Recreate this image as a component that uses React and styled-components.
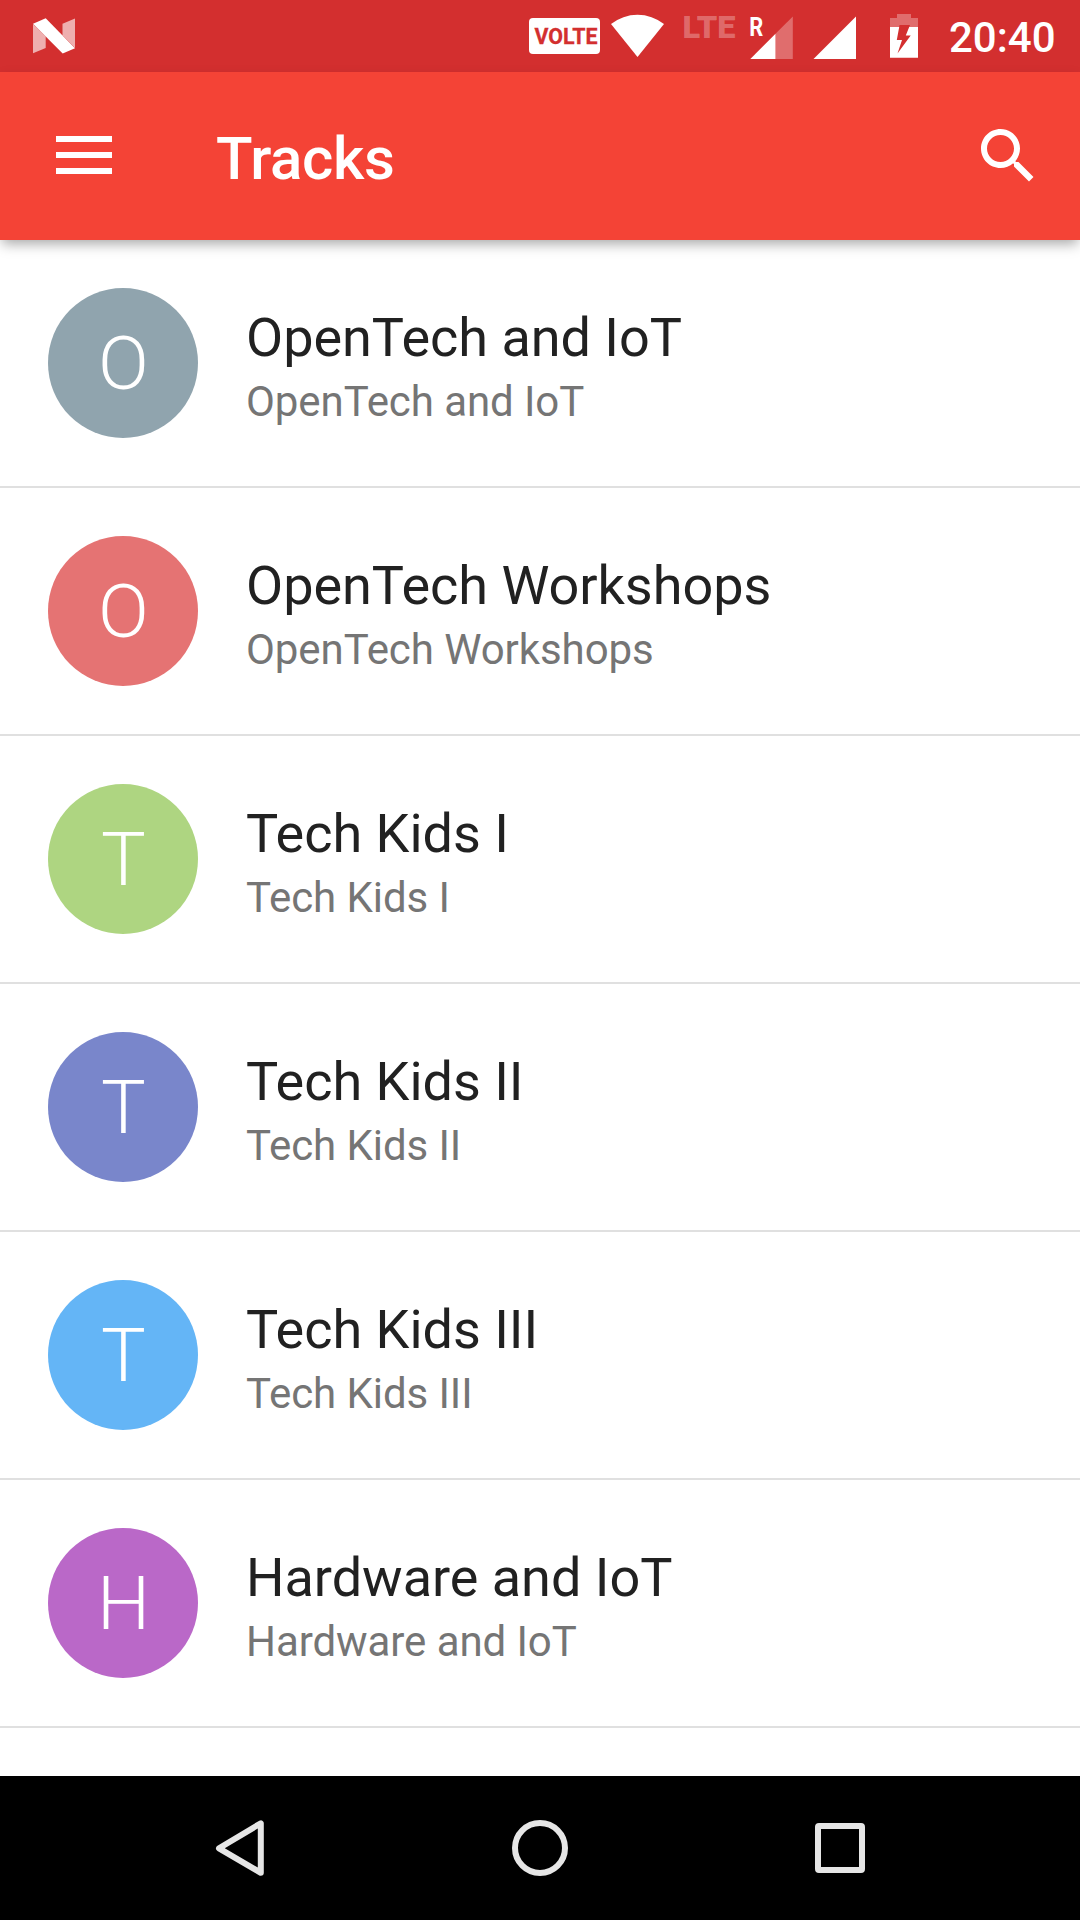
import React from "react";
import styled, { createGlobalStyle } from "styled-components";

const GlobalStyle = createGlobalStyle`
  body {
    margin: 0;
    background: #fff;
    font-family: Roboto, "Noto Sans", sans-serif;
  }
`;

const Screen = styled.div`
  display: flex;
  flex-direction: column;
  width: 1080px;
  height: 1920px;
  overflow: hidden;
  background: #fff;
`;

const StatusBar = styled.header`
  flex: none;
  display: flex;
  align-items: flex-start;
  height: 72px;
  padding: 0 24px 0 33px;
  box-sizing: border-box;
  background: #d32f2f;
`;

const StatusIcon = styled.svg`
  flex: none;
  display: block;
  width: ${(p) => p.$width}px;
  height: 72px;
  margin-left: ${(p) => p.$gap || 0}px;
  fill: #fff;
  overflow: visible;
  font-family: Roboto, sans-serif;
  font-weight: ${(p) => p.$weight || 700};
`;

const Spacer = styled.div`
  flex: 1;
`;

const Clock = styled.time`
  flex: none;
  width: 107px;
  margin-left: 31px;
  font-size: 42px;
  font-weight: 500;
  line-height: 49px;
  padding-top: 13px;
  color: #fff;
  white-space: nowrap;
`;

const AppBar = styled.div`
  flex: none;
  position: relative;
  display: flex;
  align-items: center;
  height: 168px;
  padding: 0 36px 0 56px;
  box-sizing: border-box;
  background: #f44336;
  box-shadow: 0 6px 12px -2px rgba(0, 0, 0, 0.34);
`;

const IconButton = styled.button`
  display: block;
  padding: 0;
  border: 0;
  background: none;
  svg {
    display: block;
    fill: #fff;
  }
`;

const PageTitle = styled.h1`
  flex: 1;
  margin: 6px 0 0 104px;
  font-size: 60px;
  font-weight: 500;
  line-height: 70px;
  letter-spacing: -0.3px;
  color: #fff;
`;

const TrackList = styled.ul`
  flex: 1;
  margin: 0;
  padding: 0;
  list-style: none;
`;

const TrackRow = styled.li`
  display: flex;
  align-items: flex-start;
  gap: 48px;
  height: 248px;
  padding: 48px;
  box-sizing: border-box;
  border-bottom: 2px solid #e0e0e0;
`;

const Avatar = styled.div`
  flex: none;
  width: 150px;
  height: 150px;
  border-radius: 50%;
  background: ${(p) => p.$color};
  color: #fff;
  font-size: 75px;
  font-weight: 300;
  line-height: 150px;
  text-align: center;
  text-indent: 1px;
`;

const TrackText = styled.div`
  display: flex;
  flex-direction: column;
  gap: 7px;
  padding-top: 18px;
`;

const TrackName = styled.div`
  font-size: 54px;
  line-height: 64px;
  letter-spacing: -0.02px;
  color: #212121;
`;

const TrackDescription = styled.div`
  font-size: 42px;
  line-height: 49px;
  letter-spacing: -0.07px;
  color: #757575;
`;

const NavBar = styled.nav`
  flex: none;
  display: flex;
  justify-content: center;
  height: 144px;
  background: #000;
`;

const NavButton = styled.button`
  display: flex;
  align-items: center;
  justify-content: center;
  width: 300px;
  padding: 0;
  border: 0;
  background: none;
  svg {
    fill: none;
    stroke: #e6e6e6;
    stroke-width: 6;
    stroke-linejoin: round;
  }
`;

const tracks = [
  { name: "OpenTech and IoT", color: "#90a4ae" },
  { name: "OpenTech Workshops", color: "#e57373" },
  { name: "Tech Kids I", color: "#aed581" },
  { name: "Tech Kids II", color: "#7986cb" },
  { name: "Tech Kids III", color: "#64b5f6" },
  { name: "Hardware and IoT", color: "#ba68c8" },
];

export default function App() {
  return (
    <Screen>
      <GlobalStyle />
      <StatusBar>
        <StatusIcon $width={42} viewBox="0 0 42 72">
          <path d="M0 24L12.7 36.5V48L0 53.3Z" fillOpacity="0.62" />
          <path d="M29.5 23.7L42 18.5V48L29.5 35.3Z" fillOpacity="0.62" />
          <path d="M0 23.8L12.7 18.3L42 48.2L29.7 53.5Z" />
        </StatusIcon>
        <Spacer />
        <StatusIcon $width={71} viewBox="0 0 71 72">
          <rect y="18" width="71" height="36" rx="4" />
          <text x="5.5" y="43.5" fontSize="21.5" fill="#d32f2f" stroke="#d32f2f" strokeWidth="0.3" textLength="63" lengthAdjust="spacingAndGlyphs">VOLTE</text>
        </StatusIcon>
        <StatusIcon $gap={11} $width={53} viewBox="0 0 53 72">
          <path d="M0 24A43 43 0 0 1 53 24L26.5 57Z" />
        </StatusIcon>
        <StatusIcon $gap={16} $width={60} $weight={900} viewBox="0 0 60 72">
          <text x="2.5" y="38" fontSize="32" fillOpacity="0.3" textLength="53" lengthAdjust="spacingAndGlyphs">LTE</text>
        </StatusIcon>
        <StatusIcon $gap={10} $width={43} viewBox="0 0 43 72">
          <text x="-0.7" y="35.5" fontSize="25.5" textLength="14" lengthAdjust="spacingAndGlyphs">R</text>
          <path d="M0.3 59L25.5 33.8V59Z" />
          <path d="M25.5 33.8L42.8 16.5V59H25.5Z" fillOpacity="0.3" />
        </StatusIcon>
        <StatusIcon $gap={20} $width={43} viewBox="0 0 43 72">
          <path d="M0.5 59L43 16.5V59Z" />
        </StatusIcon>
        <StatusIcon $gap={34} $width={28} viewBox="0 0 28 72">
          <path d="M0 18H7V14H21V18H28V27H19.2L20 25H9.5L9.2 27H0Z" fillOpacity="0.3" />
          <path d="M0 27H9.2L6.8 40H12L7.5 53.5L20.7 35.5H15.8L19.2 27H28V57.7H0Z" />
        </StatusIcon>
        <Clock>20:40</Clock>
      </StatusBar>

      <AppBar>
        <IconButton aria-label="Menu">
          <svg width="56" height="40" viewBox="0 0 56 40">
            <path d="M0 0H56V6H0ZM0 16H56V22H0ZM0 32H56V38H0Z" />
          </svg>
        </IconButton>
        <PageTitle>Tracks</PageTitle>
        <IconButton aria-label="Search">
          <svg width="72" height="72" viewBox="0 0 24 24">
            <path d="M15.5 14h-.79l-.28-.27C15.41 12.59 16 11.11 16 9.5 16 5.91 13.09 3 9.5 3S3 5.91 3 9.5 5.91 16 9.5 16c1.61 0 3.09-.59 4.23-1.57l.27.28v.79l5 4.99L20.49 19l-4.99-5zm-6 0C7.01 14 5 11.99 5 9.5S7.01 5 9.5 5 14 7.01 14 9.5 11.99 14 9.5 14z" />
          </svg>
        </IconButton>
      </AppBar>

      <TrackList>
        {tracks.map((t) => (
          <TrackRow key={t.name}>
            <Avatar $color={t.color}>{t.name[0]}</Avatar>
            <TrackText>
              <TrackName>{t.name}</TrackName>
              <TrackDescription>{t.name}</TrackDescription>
            </TrackText>
          </TrackRow>
        ))}
      </TrackList>

      <NavBar>
        <NavButton aria-label="Back">
          <svg width="56" height="56" viewBox="0 0 56 56">
            <path d="M7 28.3L48.8 3.3V52.8Z" />
          </svg>
        </NavButton>
        <NavButton aria-label="Home">
          <svg width="56" height="56" viewBox="0 0 56 56">
            <circle cx="28" cy="28" r="25" />
          </svg>
        </NavButton>
        <NavButton aria-label="Overview">
          <svg width="56" height="56" viewBox="0 0 56 56">
            <rect x="6" y="6" width="44" height="44" rx="1" />
          </svg>
        </NavButton>
      </NavBar>
    </Screen>
  );
}
